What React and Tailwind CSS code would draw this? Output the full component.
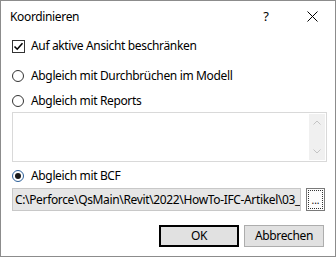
import React from "react";

function CheckBox() {
	return (
		<div className="w-[13px] h-[13px] border border-[#333] bg-white flex items-center justify-center shrink-0">
			<svg width="11" height="11" viewBox="0 0 11 11">
				<path d="M1.5 5.5 L4.2 8.2 L9.5 2.2" fill="none" stroke="#000" strokeWidth="1.6" />
			</svg>
		</div>
	);
}

function Radio({ checked }) {
	return (
		<div
			className={
				"w-[12px] h-[12px] rounded-full border bg-white flex items-center justify-center shrink-0 " +
				(checked ? "border-[#2b5f99]" : "border-[#333]")
			}
		>
			{checked && <div className="w-[6px] h-[6px] rounded-full bg-[#1a1a1a]" />}
		</div>
	);
}

function App() {
	return (
		<div
			className="w-[336px] h-[257px] border border-[#8c8c8c] bg-white flex flex-col text-[12px] tracking-[-0.35px] text-black"
			style={{ fontFamily: '"Segoe UI", "Noto Sans", sans-serif' }}
		>
			<div className="h-[31px] flex items-center pl-[9px] shrink-0">
				<span className="flex-1">Koordinieren</span>
				<span className="w-[14px] text-center mr-[34px] text-[13px]">?</span>
				<svg width="11" height="11" viewBox="0 0 11 11" className="mr-[17px]">
					<path d="M0.5 0.5 L10.5 10.5 M10.5 0.5 L0.5 10.5" stroke="#000" strokeWidth="1" />
				</svg>
			</div>

			<div className="px-[10px] flex flex-col">
				<div className="h-[20px] mt-[4px] flex items-center gap-[6px] pl-[1px]">
					<CheckBox />
					<span>Auf aktive Ansicht beschränken</span>
				</div>

				<div className="h-[20px] mt-[10px] flex items-center gap-[7px] pl-[1px]">
					<Radio />
					<span>Abgleich mit Durchbrüchen im Modell</span>
				</div>

				<div className="h-[20px] mt-[5px] flex items-center gap-[7px] pl-[1px]">
					<Radio />
					<span>Abgleich mit Reports</span>
				</div>

				<div className="h-[50px] mt-[1px] ml-[1px] w-[315px] border border-[#d9d9d9] bg-white flex justify-end p-[1px]">
					<div className="w-[16px] bg-[#f0f0f0] flex flex-col items-center justify-between py-[6px]">
						<svg width="8" height="5" viewBox="0 0 8 5">
							<path d="M0.5 4.5 L4 1 L7.5 4.5" fill="none" stroke="#c4c4c4" strokeWidth="1" />
						</svg>
						<svg width="8" height="5" viewBox="0 0 8 5">
							<path d="M0.5 0.5 L4 4 L7.5 0.5" fill="none" stroke="#c4c4c4" strokeWidth="1" />
						</svg>
					</div>
				</div>

				<div className="h-[20px] mt-[4px] flex items-center gap-[7px] pl-[1px]">
					<Radio checked />
					<span>Abgleich mit BCF</span>
				</div>

				<div className="h-[23px] mt-[2px] flex items-center pl-[1px]">
					<div className="w-[289px] h-[23px] border border-[#c8c8c8] bg-[#e6e6e6] overflow-hidden whitespace-nowrap flex items-center pl-[2px]">
						C:\Perforce\QsMain\Revit\2022\HowTo-IFC-Artikel\03_
					</div>
					<div className="ml-[5px] w-[19px] h-[23px] border border-[#7a7a7a] bg-[#fdfdfd] p-[1px]">
						<div className="w-full h-full border border-dotted border-[#333] flex items-end justify-center leading-none pb-[3px] text-[10px] tracking-normal">
							...
						</div>
					</div>
				</div>

				<div className="h-[22px] mt-[14px] flex justify-end gap-[5px] pr-[1px]">
					<button className="w-[80px] h-[22px] border-2 border-black bg-[#e1e1e1] flex items-center justify-center">
						OK
					</button>
					<button className="w-[80px] h-[22px] border border-[#adadad] bg-[#e1e1e1] flex items-center justify-center">
						Abbrechen
					</button>
				</div>
			</div>
		</div>
	);
}

export default App;
